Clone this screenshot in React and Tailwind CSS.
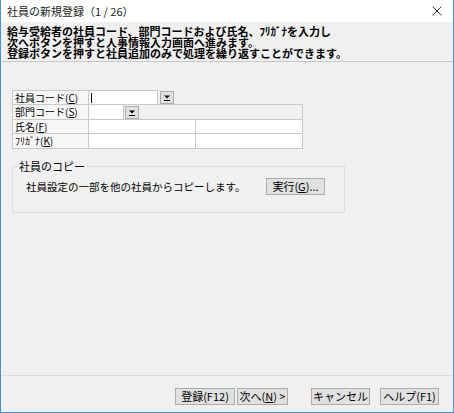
const DropButton = ({ className = '' }) => (
  <div className={`w-[14px] h-[13px] bg-[#e1e1e1] border border-[#adadad] flex items-center justify-center ${className}`}>
    <svg width="8" height="8" viewBox="0 0 8 8">
      <path d="M1 1.5 H7 L4 4.5 Z" fill="#000" />
      <rect x="1" y="6" width="6" height="1" fill="#000" />
    </svg>
  </div>
);

const Label = ({ text, k }) => (
  <div className="w-[76px] shrink-0 border-l border-t border-[#c8c8c8] bg-[#f7f7f7] pl-[2px] flex items-center leading-none text-[10px]">
    <span>
      {text}(<span className="underline">{k}</span>)
    </span>
  </div>
);

const Button = ({ children, className = '' }) => (
  <button className={`h-[17px] bg-[#e1e1e1] border border-[#adadad] text-[11px] leading-none flex items-center justify-center ${className}`}>
    {children}
  </button>
);

export default function App() {
  return (
    <div className="w-[454px] h-[413px] bg-[#f0f0f0] border-x border-b border-[#3d97db] flex flex-col text-[11px] text-black font-['Noto_Sans_CJK_JP',sans-serif]">
      {/* title bar */}
      <div className="h-[22px] shrink-0 bg-white flex items-center justify-between pl-[6px] pr-[11px]">
        <span className="text-[11px] text-[#222]">社員の新規登録（1 / 26）</span>
        <svg width="10" height="10" viewBox="0 0 10 10">
          <path d="M0.5 0.5 L9.5 9.5 M9.5 0.5 L0.5 9.5" stroke="#333" strokeWidth="1" />
        </svg>
      </div>

      {/* description */}
      <div className="h-[40px] shrink-0 border-b border-[#c8c8c8] px-[6px] pt-[4px] font-bold leading-[11px]">
        <div>給与受給者の社員コード、部門コードおよび氏名、ﾌﾘｶﾞﾅを入力し</div>
        <div>次へボタンを押すと人事情報入力画面へ進みます。</div>
        <div>登録ボタンを押すと社員追加のみで処理を繰り返すことができます。</div>
      </div>

      <div className="flex-1 flex flex-col pl-[11px]">
        {/* form grid */}
        <div className="mt-[28px] w-[291px]">
          <div className="flex h-[14px]">
            <Label text="社員コード" k="C" />
            <div className="w-[70px] border-l border-t border-r border-[#c8c8c8] bg-white flex items-center pl-[2px]">
              <div className="w-px h-[10px] bg-black" />
            </div>
            <DropButton className="ml-[2px] mt-[1px]" />
          </div>
          <div className="flex h-[15px]">
            <Label text="部門コード" k="S" />
            <div className="w-[35px] border-l border-t border-[#c8c8c8] bg-white" />
            <div className="flex-1 border-l border-t border-r border-[#c8c8c8] bg-[#f0f0f0] pl-[1px] pt-px">
              <DropButton />
            </div>
          </div>
          <div className="flex h-[14px]">
            <Label text="氏名" k="F" />
            <div className="w-[107px] border-l border-t border-[#c8c8c8] bg-white" />
            <div className="flex-1 border-l border-t border-r border-[#c8c8c8] bg-white" />
          </div>
          <div className="flex h-[16px] border-b border-[#c8c8c8]">
            <Label text="ﾌﾘｶﾞﾅ" k="K" />
            <div className="w-[107px] border-l border-t border-[#c8c8c8] bg-white" />
            <div className="flex-1 border-l border-t border-r border-[#c8c8c8] bg-white" />
          </div>
        </div>

        {/* copy group */}
        <fieldset className="mt-[10px] w-[333px] h-[54px] border border-[#dcdcdc] px-[13px]">
          <legend className="ml-[-9px] px-[2px] leading-[14px]">社員のコピー</legend>
          <div className="flex items-center mt-[5px]">
            <div className="w-[240px] shrink-0 text-[10.5px]">社員設定の一部を他の社員からコピーします。</div>
            <Button className="w-[59px]">
              <span>
                実行(<span className="underline">G</span>)...
              </span>
            </Button>
          </div>
        </fieldset>

        <div className="flex-1" />
      </div>

      {/* bottom bar */}
      <div className="h-[37px] shrink-0 border-t border-[#dcdcdc] flex items-start pt-[12px] pl-[174px]">
        <Button className="w-[60px]">登録(F12)</Button>
        <Button className="w-[51px] ml-[2px]">
          <span>
            次へ(<span className="underline">N</span>) &gt;
          </span>
        </Button>
        <Button className="w-[59px] ml-[23px]">キャンセル</Button>
        <Button className="w-[59px] ml-[10px]">ヘルプ(F1)</Button>
      </div>
    </div>
  );
}
